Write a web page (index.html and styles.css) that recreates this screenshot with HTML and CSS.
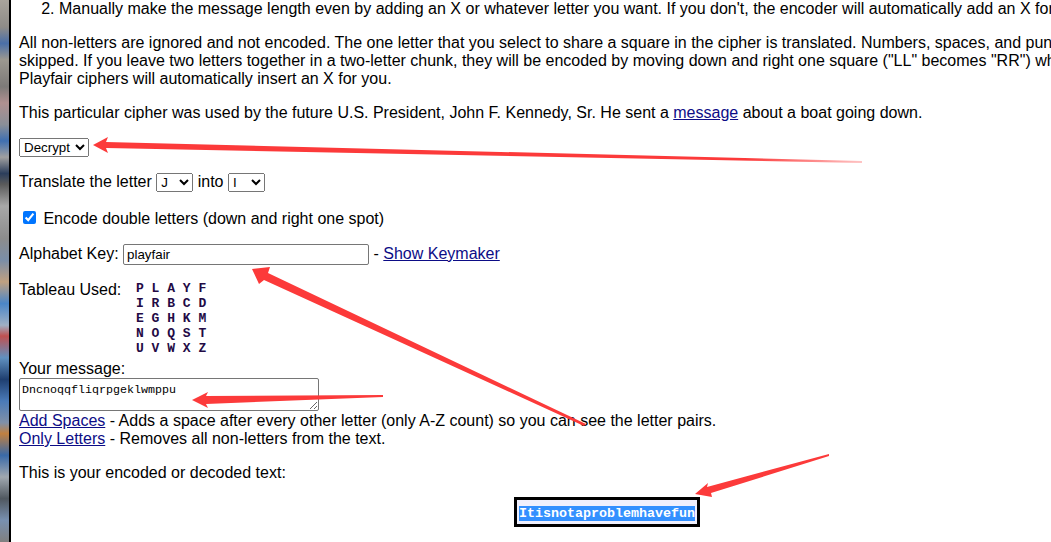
FILE: index.html
```html
<!DOCTYPE html>
<html>
<head>
<meta charset="utf-8">
<title>Playfair</title>
<link rel="stylesheet" href="styles.css">
</head>
<body>
<div class="page">
  <div class="strip"></div>
  <div class="content">
    <ol class="steps" start="2">
      <li>Manually make the message length even by adding an X or whatever letter you want. If you don't, the encoder will automatically add an X for you.</li>
    </ol>
    <p>All non-letters are ignored and not encoded. The one letter that you select to share a square in the cipher is translated. Numbers, spaces, and punctuation are<br>skipped. If you leave two letters together in a two-letter chunk, they will be encoded by moving down and right one square ("LL" becomes "RR") whereas some other<br>Playfair ciphers will automatically insert an X for you.</p>
    <p>This particular cipher was used by the future U.S. President, John F. Kennedy, Sr. He sent a <a href="#">message</a> about a boat going down.</p>
    <p class="row"><select class="mode"><option>Decrypt</option><option>Encrypt</option></select></p>
    <p class="row">Translate the letter <select class="letter"><option>J</option></select> into <select class="letter"><option>I</option></select></p>
    <p class="row"><label><input type="checkbox" class="check" checked> Encode double letters (down and right one spot)</label></p>
    <p class="row">Alphabet Key: <input type="text" class="key" value="playfair"> - <a href="#">Show Keymaker</a></p>
    <div class="tableau">
      <span class="tab-label">Tableau Used:</span>
      <pre class="grid">P L A Y F
I R B C D
E G H K M
N O Q S T
U V W X Z</pre>
    </div>
    <div class="msg-label">Your message:</div>
    <textarea class="msg">Dncnoqqfliqrpgeklwmppu</textarea>
    <div><a href="#">Add Spaces</a> - Adds a space after every other letter (only A-Z count) so you can see the letter pairs.</div>
    <div><a href="#">Only Letters</a> - Removes all non-letters from the text.</div>
    <p>This is your encoded or decoded text:</p>
    <div class="result-wrap"><span class="result"><span class="sel">Itisnotaproblemhavefun</span></span></div>
  </div>
  <svg class="arrows" width="1051" height="542" viewBox="0 0 1051 542">
    <defs>
      <linearGradient id="g1" x1="93" y1="0" x2="862" y2="0" gradientUnits="userSpaceOnUse">
        <stop offset="0" stop-color="#fc3a3a"/><stop offset="0.85" stop-color="#fc3a3a"/><stop offset="1" stop-color="#fc3a3a" stop-opacity="0.3"/>
      </linearGradient>
    </defs>
    <polygon fill="url(#g1)" points="93,145 108,137 106,142 862,161 862,163 106,148 108,153"/>
    <polygon fill="#fc3a3a" points="252,269 270,267 268,273 586,424 584,426 264,280 259,284"/>
    <polygon fill="#fc3a3a" points="192,400 208,392 206,396 383,395 383,397 206,404 208,408"/>
    <polygon fill="#fc3a3a" points="695,494 708,483 707,487 829,454 829,456 711,493 712,497"/>
  </svg>
</div>
</body>
</html>
```

FILE: styles.css
```css
html, body {
  margin: 0;
  padding: 0;
  background: #fff;
  overflow: hidden;
}

.page {
  position: relative;
  display: flex;
  width: 1051px;
  height: 542px;
  overflow: hidden;
  font-family: "Liberation Sans", Arial, sans-serif;
  font-size: 16px;
  line-height: 18px;
  color: #000;
}

.strip {
  flex: 0 0 9px;
  border-right: 2px solid #000;
  background: linear-gradient(180deg,
    #a9a49c 0%, #8f8c88 5%, #4a6fa8 8%, #9c9890 11%, #7d7a78 16%,
    #b09090 19%, #8a8f98 23%, #3f6fb0 26%, #a0a0a0 29%, #2c3e5c 32%,
    #5a5a5a 34%, #a8a8a8 38%, #8c8c8c 44%, #7a8ea8 48%, #c0a080 52%,
    #4b86c8 56%, #9fb0c4 60%, #c05050 62%, #6090c0 66%, #1f3f70 70%,
    #4a7ab8 74%, #8090a8 78%, #c08040 80%, #3a6aa8 84%, #a0a8b0 88%,
    #505860 92%, #7890b0 96%, #808080 100%);
}

.content {
  flex: 0 0 1176px;
  padding-left: 8px;
}

.steps {
  margin: 0;
  padding-left: 40px;
}

p {
  margin: 16px 0;
}

a {
  color: #0c0c86;
  text-decoration: underline;
}

.row {
  margin: 16px 0;
}

select {
  font-family: "Liberation Sans", Arial, sans-serif;
  font-size: 13.33px;
  height: 19px;
  padding: 0;
  vertical-align: baseline;
}

.mode {
  width: 70px;
}

.letter {
  width: 37px;
}

.check {
  margin: 3px 3px 3px 4px;
}

.key {
  width: 246px;
  height: 21px;
  box-sizing: border-box;
  font-family: "Liberation Sans", Arial, sans-serif;
  font-size: 13.33px;
  padding: 1px 3px;
  border: 1px solid #767676;
  border-radius: 2px;
}

.tableau {
  display: flex;
  margin: 16px 0 4px;
}

.tab-label {
  width: 117px;
}

.grid {
  margin: 0;
  font-family: "Liberation Mono", "Courier New", monospace;
  font-weight: bold;
  font-size: 13px;
  line-height: 15px;
  color: #230a45;
  padding-top: 0;
}

.msg-label {
  line-height: 18px;
}

.msg {
  display: block;
  box-sizing: border-box;
  width: 300px;
  height: 33px;
  margin: 0 0 1px;
  padding: 4px 2px 2px;
  font-family: "Liberation Mono", "Courier New", monospace;
  font-size: 11.67px;
  line-height: 14px;
  border: 1px solid #767676;
  border-radius: 2px;
  resize: vertical;
}

.result-wrap {
  text-align: center;
  margin-top: -1px;
}

.result {
  display: inline-block;
  border: 3px solid #000;
  background: #f0f0fd;
  padding: 6px 2px 3px;
  font-family: "Liberation Mono", "Courier New", monospace;
  font-weight: bold;
  font-size: 13.33px;
  line-height: 15px;
}

.sel {
  background: #3390ff;
  color: #fff;
}

.arrows {
  position: absolute;
  top: 0;
  left: 0;
  pointer-events: none;
}
```
